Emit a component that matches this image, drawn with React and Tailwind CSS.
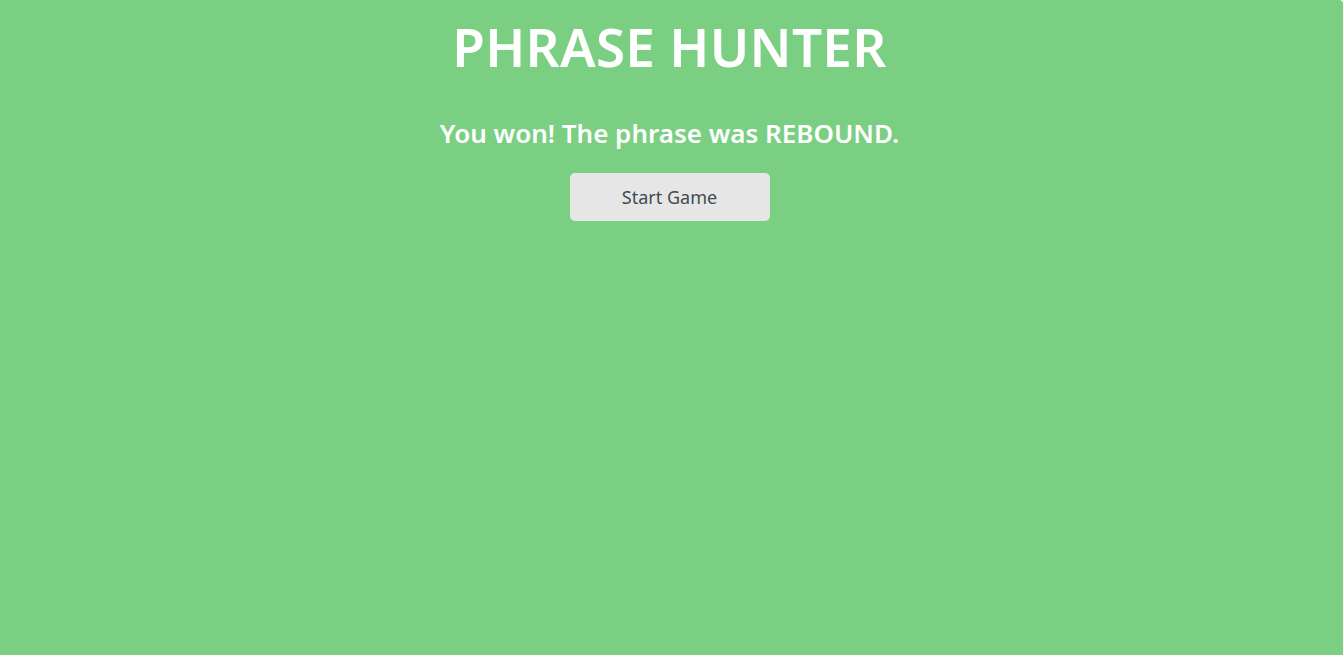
import React from "react";

export default function App() {
  return (
    <div
      className="min-h-screen bg-[#7acf83] text-white flex flex-col items-center pr-[4px] rounded-tr-[4px]"
      style={{ fontFamily: '"Noto Sans", "Open Sans", sans-serif' }}
    >
      <h1 className="mt-[12px] text-[53px] leading-[70px] font-semibold tracking-[0.3px]">
        PHRASE HUNTER
      </h1>
      <h2 className="mt-[33px] text-[26px] leading-[36px] font-semibold">
        You won! The phrase was REBOUND.
      </h2>
      <button className="mt-[22px] w-[200px] h-[48px] bg-[#e6e6e6] rounded-[5px] text-[18px] text-[#414b50]">
        Start Game
      </button>
    </div>
  );
}
